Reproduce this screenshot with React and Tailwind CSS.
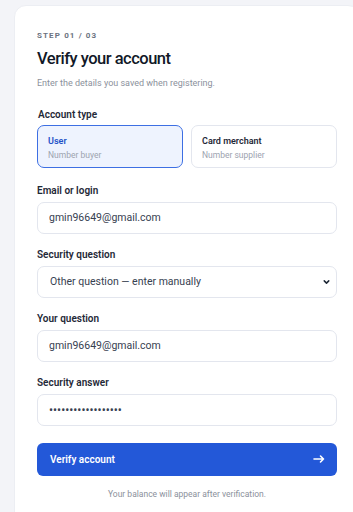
import { useState } from 'react'

function Field({ label, children }) {
  return (
    <div>
      <div className="text-[10px] font-semibold text-[#1f2937] leading-none mb-[6px]">{label}</div>
      {children}
    </div>
  )
}

export default function App() {
  const [type, setType] = useState('user')
  const [email, setEmail] = useState('gmin96649@gmail.com')
  const [question, setQuestion] = useState('gmin96649@gmail.com')
  const [answer, setAnswer] = useState('abcdefghijklmnopqr')

  const inputCls =
    'w-full h-[32px] rounded-[7px] border border-[#e3e6ee] bg-white px-[11px] text-[10.5px] text-[#374151] outline-none'

  return (
    <div className="w-[353px] h-[512px] overflow-hidden bg-[#f3f4f8] pt-[5px] pl-[14px]" style={{ fontFamily: 'Roboto, "Noto Sans", sans-serif' }}>
      <div className="w-[346px] min-h-[520px] rounded-[12px] bg-white border border-[#eceef3] pl-[22px] pr-[22px] pt-[26px]">
        {/* Header */}
        <div className="text-[8px] font-bold tracking-[0.14em] text-[#6b7280] leading-none">STEP 01 / 03</div>
        <h1 className="mt-[11px] text-[16.5px] font-medium text-[#111827] leading-none tracking-[-0.03em]">Verify your account</h1>
        <p className="mt-[11px] text-[9px] text-[#8b919c] leading-none">Enter the details you saved when registering.</p>

        {/* Account type */}
        <div className="mt-[22px] text-[10px] font-semibold text-[#1f2937] leading-none pl-[1px]">Account type</div>
        <div className="mt-[5px] grid grid-cols-2 gap-[8px]">
          <button
            onClick={() => setType('user')}
            className={`h-[43px] rounded-[7px] text-left px-[10px] pt-[11px] flex flex-col ${type === 'user' ? 'border-[1.5px] border-[#3d6fe3] bg-[#eef3fe]' : 'border border-[#e3e6ee] bg-white'}`}
          >
            <div className={`text-[9px] font-semibold leading-none ${type === 'user' ? 'text-[#2452c8]' : 'text-[#1f2937]'}`}>User</div>
            <div className="mt-[5px] text-[8.5px] text-[#9ca3af] leading-none">Number buyer</div>
          </button>
          <button
            onClick={() => setType('merchant')}
            className={`h-[43px] rounded-[7px] text-left px-[10px] pt-[11px] flex flex-col ${type === 'merchant' ? 'border-[1.5px] border-[#3d6fe3] bg-[#eef3fe]' : 'border border-[#e3e6ee] bg-white'}`}
          >
            <div className={`text-[9px] font-semibold leading-none ${type === 'merchant' ? 'text-[#2452c8]' : 'text-[#1f2937]'}`}>Card merchant</div>
            <div className="mt-[5px] text-[8.5px] text-[#9ca3af] leading-none">Number supplier</div>
          </button>
        </div>

        {/* Fields */}
        <div className="mt-[18px] flex flex-col gap-[16px]">
          <Field label="Email or login">
            <input value={email} onChange={(e) => setEmail(e.target.value)} className={inputCls} />
          </Field>
          <Field label="Security question">
            <div className="relative">
              <select className={`${inputCls} appearance-none pl-[12px]`} defaultValue="other">
                <option value="other">Other question — enter manually</option>
                <option value="pet">Name of your first pet</option>
              </select>
              <svg className="absolute right-[6px] top-1/2 -translate-y-1/2 pointer-events-none" width="9" height="9" viewBox="0 0 24 24" fill="none" stroke="#1f2937" strokeWidth="4" strokeLinecap="round" strokeLinejoin="round">
                <path d="M6 9l6 6 6-6" />
              </svg>
            </div>
          </Field>
          <Field label="Your question">
            <input value={question} onChange={(e) => setQuestion(e.target.value)} className={inputCls} />
          </Field>
          <Field label="Security answer">
            <input type="password" value={answer} onChange={(e) => setAnswer(e.target.value)} className={`${inputCls} !text-[12px]`} />
          </Field>
        </div>

        {/* Submit */}
        <button className="mt-[17px] w-full h-[33px] rounded-[6px] bg-[#2358d8] flex items-center justify-between pl-[13px] pr-[12px] text-white">
          <span className="text-[10px] font-semibold">Verify account</span>
          <svg width="12" height="10" viewBox="0 0 12 10" fill="none" stroke="white" strokeWidth="1.6" strokeLinecap="round" strokeLinejoin="round">
            <path d="M1 5h9.5M7.5 2l3 3-3 3" />
          </svg>
        </button>
        <p className="mt-[14px] text-center text-[8.5px] text-[#8b919c] leading-none">Your balance will appear after verification.</p>
      </div>
    </div>
  )
}
